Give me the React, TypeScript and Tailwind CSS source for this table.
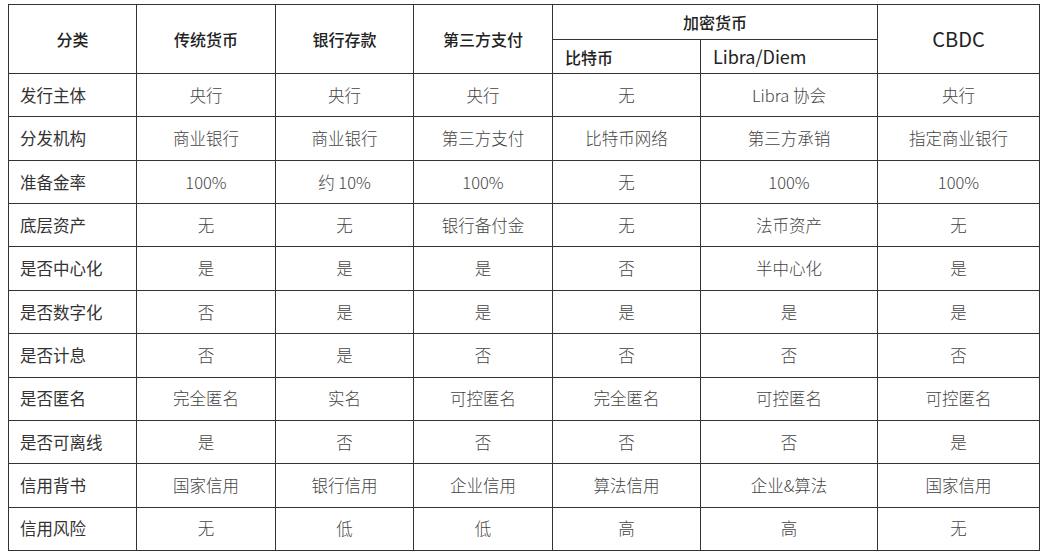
import React from "react";

const rows: string[][] = [
  ["发行主体", "央行", "央行", "央行", "无", "Libra 协会", "央行"],
  ["分发机构", "商业银行", "商业银行", "第三方支付", "比特币网络", "第三方承销", "指定商业银行"],
  ["准备金率", "100%", "约 10%", "100%", "无", "100%", "100%"],
  ["底层资产", "无", "无", "银行备付金", "无", "法币资产", "无"],
  ["是否中心化", "是", "是", "是", "否", "半中心化", "是"],
  ["是否数字化", "否", "是", "是", "是", "是", "是"],
  ["是否计息", "否", "是", "否", "否", "否", "否"],
  ["是否匿名", "完全匿名", "实名", "可控匿名", "完全匿名", "可控匿名", "可控匿名"],
  ["是否可离线", "是", "否", "否", "否", "否", "是"],
  ["信用背书", "国家信用", "银行信用", "企业信用", "算法信用", "企业&算法", "国家信用"],
  ["信用风险", "无", "低", "低", "高", "高", "无"],
];

const font = { fontFamily: '"Noto Sans CJK SC", "Noto Sans", sans-serif' };

export default function App() {
  return (
    <div className="w-[1051px] h-[559px] bg-white pl-[8px] pt-[4px]" style={font}>
      <table className="border-collapse table-fixed w-[1031px] border border-[#333]">
        <colgroup>
          <col className="w-[128px]" />
          <col className="w-[139px]" />
          <col className="w-[138px]" />
          <col className="w-[139px]" />
          <col className="w-[148px]" />
          <col className="w-[177px]" />
          <col className="w-[162px]" />
        </colgroup>
        <thead>
          <tr className="h-[35px]">
            <th rowSpan={2} className="border border-[#333] text-[16px] font-medium text-[#222] text-center">分类</th>
            <th rowSpan={2} className="border border-[#333] text-[16px] font-medium text-[#222] text-center">传统货币</th>
            <th rowSpan={2} className="border border-[#333] text-[16px] font-medium text-[#222] text-center">银行存款</th>
            <th rowSpan={2} className="border border-[#333] text-[16px] font-medium text-[#222] text-center">第三方支付</th>
            <th colSpan={2} className="border border-[#333] text-[16px] font-medium text-[#222] text-center">加密货币</th>
            <th rowSpan={2} className="border border-[#333] text-[20px] font-normal text-[#222] text-center">CBDC</th>
          </tr>
          <tr className="h-[34px]">
            <th className="border border-[#333] text-[16px] font-medium text-[#222] text-left pl-[12px]">比特币</th>
            <th className="border border-[#333] text-[18px] font-normal text-[#222] text-left pl-[12px]">Libra/Diem</th>
          </tr>
        </thead>
        <tbody>
          {rows.map((r, i) => (
            <tr key={i} className="h-[43.36px]">
              {r.map((c, j) =>
                j === 0 ? (
                  <td key={j} className="border border-[#333] text-[16.5px] font-normal text-[#333] text-left pl-[11px]">{c}</td>
                ) : (
                  <td key={j} className="border border-[#333] text-[16.5px] font-light text-[#444] text-center">{c}</td>
                )
              )}
            </tr>
          ))}
        </tbody>
      </table>
    </div>
  );
}
